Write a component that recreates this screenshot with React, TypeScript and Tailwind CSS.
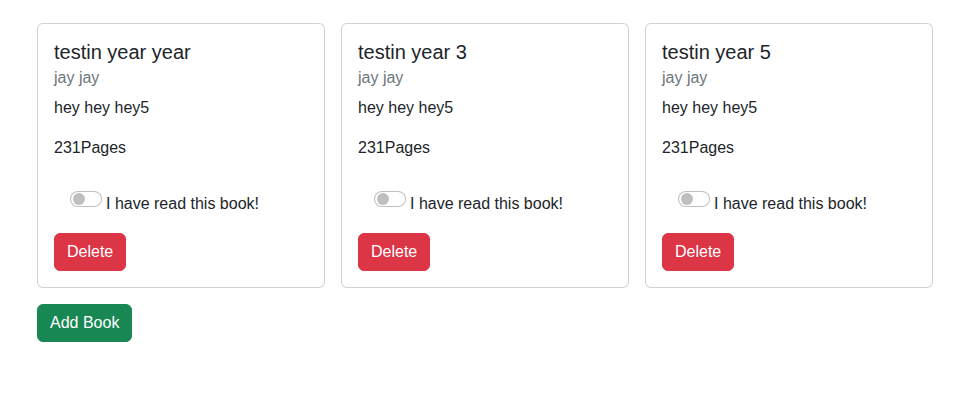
import React from "react";

const books = [
  { title: "testin year year", author: "jay jay", desc: "hey hey hey5", pages: 231 },
  { title: "testin year 3", author: "jay jay", desc: "hey hey hey5", pages: 231 },
  { title: "testin year 5", author: "jay jay", desc: "hey hey hey5", pages: 231 },
];

function Card({ b }: { b: (typeof books)[number] }) {
  return (
    <div className="w-[288px] rounded-[6px] border border-[rgba(0,0,0,0.175)] bg-white p-4 text-[#212529]">
      <h5 className="text-[20px] leading-[24px] font-medium mb-2">{b.title}</h5>
      <h6 className="text-[16px] leading-[19.2px] font-medium text-[#6c757d] -mt-1 mb-[9px]">{b.author}</h6>
      <p className="text-[16px] leading-[24px] mb-4">{b.desc}</p>
      <p className="text-[16px] leading-[24px]">{b.pages}Pages</p>
      <div className="mt-[32px] pl-4 flex items-start gap-[4px]">
        <span className="relative mt-[-1px] block w-[32px] h-[16px] rounded-full border border-[rgba(0,0,0,0.25)] bg-white">
          <span className="absolute left-[2px] top-[1px] w-[12px] h-[12px] rounded-full bg-[#bfbfbf]" />
        </span>
        <span className="text-[16px] leading-[24px]">I have read this book!</span>
      </div>
      <button className="mt-[17px] block border border-[#dc3545] py-[6px] px-3 rounded-[6px] bg-[#dc3545] text-white text-[16px] leading-[24px]">
        Delete
      </button>
    </div>
  );
}

export default function App() {
  return (
    <div className="min-h-[403px] bg-white pl-[37px] pt-[23px]" style={{ fontFamily: '"Liberation Sans", Arial, sans-serif' }}>
      <div className="flex gap-4">
        {books.map((b, i) => (
          <Card key={i} b={b} />
        ))}
      </div>
      <button className="mt-4 block border border-[#198754] py-[6px] px-3 rounded-[6px] bg-[#198754] text-white text-[16px] leading-[24px]">
        Add Book
      </button>
    </div>
  );
}
